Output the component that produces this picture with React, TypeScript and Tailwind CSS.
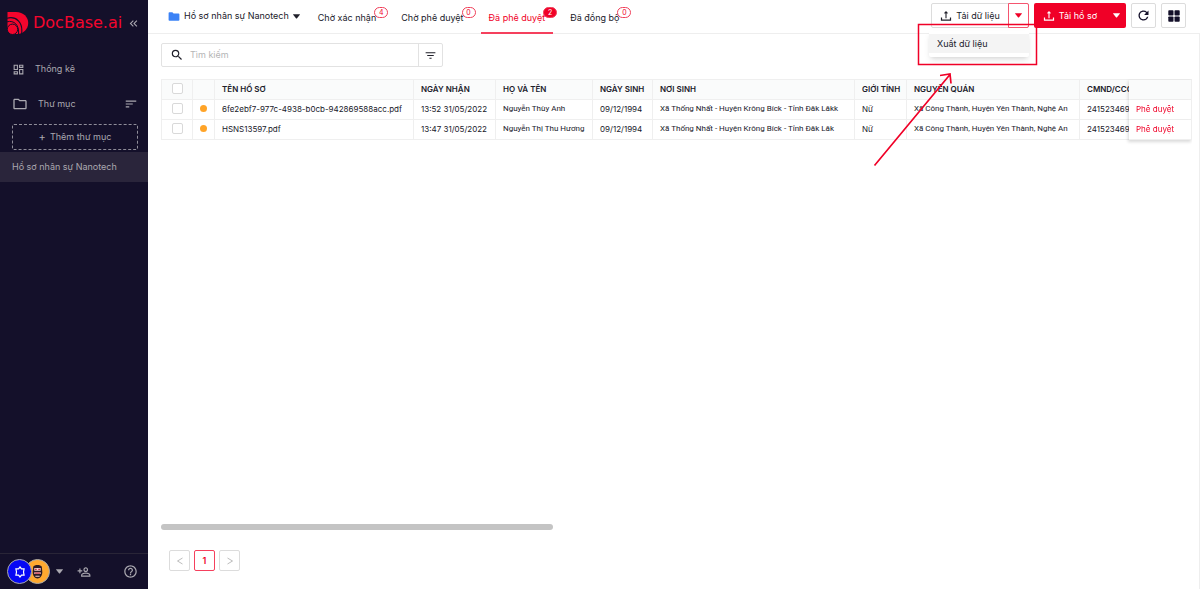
import type { ReactNode } from 'react';
import {
  MdFilterList,
  MdHelpOutline,
  MdKeyboardDoubleArrowLeft,
  MdOutlineDashboard,
  MdOutlineFolder,
  MdOutlinePersonAddAlt,
  MdRefresh,
  MdSearch,
  MdSort,
} from 'react-icons/md';

const TABS = [
  { label: 'Chờ xác nhận', count: 4 },
  { label: 'Chờ phê duyệt', count: 0 },
  { label: 'Đã phê duyệt', count: 2, active: true },
  { label: 'Đã đồng bộ', count: 0 },
];

const COLUMNS = [
  { name: 'TÊN HỒ SƠ' },
  { name: 'NGÀY NHẬN' },
  { name: 'HỌ VÀ TÊN', prose: true },
  { name: 'NGÀY SINH' },
  { name: 'NƠI SINH', prose: true },
  { name: 'GIỚI TÍNH' },
  { name: 'NGUYÊN QUÁN', prose: true },
  { name: 'CMND/CCCD' },
];

const ROWS = [
  [
    '6fe2ebf7-977c-4938-b0cb-942869588acc.pdf',
    '13:52 31/05/2022',
    'Nguyễn Thùy Anh',
    '09/12/1994',
    'Xã Thống Nhất - Huyện Krông Bíck - Tỉnh Đăk Lăkk',
    'Nữ',
    'Xã Công Thành, Huyện Yên Thành, Nghệ An',
    '241523469',
  ],
  [
    'HSNS13597.pdf',
    '13:47 31/05/2022',
    'Nguyễn Thị Thu Hương',
    '09/12/1994',
    'Xã Thống Nhất - Huyện Krông Bíck - Tỉnh Đăk Lăk',
    'Nữ',
    'Xã Công Thành, Huyện Yên Thành, Nghệ An',
    '241523469',
  ],
];

function Logo() {
  return (
    <svg viewBox="0 0 22 24" className="h-6 w-[22px] shrink-0" fill="none" aria-hidden="true">
      <path d="M.5 1H9c7.500 0 12.200 5 12.200 11S16.500 23 10 23H6L.5 18z" fill="#f5052d" />
      <path d="M0 7.200c9-2.400 16.500 4 14.500 16" stroke="#14102a" strokeWidth="1.100" />
      <path d="M0 10.800c7-1.800 12.500 3 11.500 12.500" stroke="#14102a" strokeWidth="1" />
      <circle cx="5.500" cy="18.300" r="5.200" fill="#f5052d" stroke="#14102a" strokeWidth="1" />
    </svg>
  );
}

function Caret() {
  return (
    <svg viewBox="0 0 8 5" className="h-[5px] w-[7px] shrink-0" fill="currentColor" aria-hidden="true">
      <path d="M.3 0h7.400q.4.200.1.600L4.400 4.700q-.4.400-.8 0L.2.600Q-.1.200.3 0z" />
    </svg>
  );
}

function TrayIcon() {
  return (
    <svg viewBox="0 0 12 12" className="size-3 shrink-0" fill="none" stroke="currentColor" aria-hidden="true">
      <path d="M1.500 7.500v2.700h9V7.500" strokeWidth="1.200" />
      <path d="M6 1.800v6.400M4.500 3.300 6 1.800l1.500 1.500" strokeWidth="1.100" />
    </svg>
  );
}

function Sidebar() {
  return (
    <aside className="flex w-[148px] shrink-0 flex-col bg-[#14102a] text-[9px] text-[#aaa8b0]">
      <div className="flex h-[46px] items-center justify-between pr-2 pl-[7px]">
        <div className="flex items-center gap-1">
          <Logo />
          <span className="font-['DejaVu_Sans',sans-serif] text-base text-[#f5052d]">DocBase.ai</span>
        </div>
        <button type="button" aria-label="Thu gọn" className="shrink-0">
          <MdKeyboardDoubleArrowLeft size={13} />
        </button>
      </div>

      <nav className="flex flex-col">
        <a href="#thong-ke" className="mt-2 flex h-[30px] items-center gap-2.5 px-3">
          <MdOutlineDashboard size={13} />
          Thống kê
        </a>
        <div className="mt-1 flex h-[32px] items-center gap-3 pr-2.5 pl-3">
          <a href="#thu-muc" className="flex flex-1 items-center gap-2.5">
            <MdOutlineFolder size={16} />
            Thư mục
          </a>
          <button type="button" aria-label="Sắp xếp">
            <MdSort size={14} />
          </button>
        </div>
        <button
          type="button"
          className="mt-1 mr-2.5 ml-3 flex h-[26px] items-center justify-center gap-1 rounded-xs border border-dashed border-[#8f8d99]"
        >
          <span className="text-[11px] leading-3">+</span> Thêm thư mục
        </button>
        <a href="#nanotech" className="mt-[2px] flex h-[30px] items-center bg-[#2a253b] px-3">
          Hồ sơ nhân sự Nanotech
        </a>
      </nav>

      <div className="mt-auto flex h-9 items-center border-t border-[#292537] px-[7px]">
        <span className="z-10 flex size-[25px] items-center justify-center rounded-full border border-[#aaa] bg-[#0608f5] text-white">
          <svg viewBox="0 0 12 12" className="size-3" fill="none" stroke="currentColor" strokeWidth="1.200" aria-hidden="true">
            <path d="M6 1 7.500 2.800h2.600L9.500 6l.6 3.200H7.500L6 11 4.500 9.200H1.900L2.500 6l-.6-3.200h2.600z" />
          </svg>
        </span>
        <span className="-ml-[7px] flex size-[25px] items-center justify-center rounded-full border border-[#aaa] bg-[#ffa930]">
          <svg viewBox="0 0 14 14" className="size-[15px]" aria-hidden="true">
            <path d="M3 2.500C4 .5 10 .5 11 2.500l.5 5C11.500 11 9.500 13.500 7 13.500S2.500 11 2.500 7.500z" fill="#2c1b25" />
            <path d="M4 3.800h6v2.400H4zM4 7.600h6v1.800H4zM5 11h4v.8H5z" fill="#f6d3cc" />
            <path d="M4.500 5H6.300M7.700 5H9.500M4.500 8.500h5" stroke="#c8394e" />
          </svg>
        </span>
        <button type="button" aria-label="Tài khoản" className="ml-1.5">
          <Caret />
        </button>
        <button type="button" aria-label="Thêm người" className="ml-[14px]">
          <MdOutlinePersonAddAlt size={14} className="-scale-x-100" />
        </button>
        <button type="button" aria-label="Trợ giúp" className="ml-auto pr-[3px]">
          <MdHelpOutline size={15} />
        </button>
      </div>
    </aside>
  );
}

function ExportMenu() {
  return (
    <div className="relative">
      <div className="flex h-[25px] rounded-xs border border-[#dcdcdc] bg-white">
        <button type="button" className="flex w-[76px] items-center justify-center gap-1 whitespace-nowrap">
          <TrayIcon />
          Tải dữ liệu
        </button>
        <button
          type="button"
          aria-label="Mở danh sách"
          className="-my-px -mr-px flex w-[21px] items-center justify-center rounded-r-xs border border-[#f5556f] text-[#f00027]"
        >
          <Caret />
        </button>
      </div>

      <div role="menu" className="absolute top-7 right-0 z-10 w-[100px] rounded-xs bg-white pt-[3px] pb-1 shadow-md">
        <button type="button" role="menuitem" className="flex h-[19px] w-full items-center bg-[#f4f4f4] px-2">
          Xuất dữ liệu
        </button>
      </div>

      {/* Highlight box and arrow over the open menu */}
      <svg
        viewBox="0 0 168 146"
        className="pointer-events-none absolute top-5 -right-[12px] z-20 h-[146px] w-[168px] max-w-none"
        fill="none"
        stroke="#f00027"
        aria-hidden="true"
      >
        <rect x="45.500" y="1.500" width="118" height="40" strokeWidth="1.500" />
        <path d="M1.500 142.500 77 51.500M67 52.500l10-1.500 1 9.500" strokeWidth="1.700" />
      </svg>
    </div>
  );
}

function Header() {
  return (
    <header className="flex h-[34px] items-start border-b border-[#eeeeee] pr-3.5 pl-5 text-[9px] text-[#20202a]">
      <button type="button" className="flex h-8 items-center whitespace-nowrap">
        <svg viewBox="0 0 12 10" className="mr-1 h-[9px] w-3" aria-hidden="true">
          <path d="M0 1.200Q0 .3 1 .3h3.200l1.300 1.300H11q1 0 1 1V9q0 .8-1 .8H1Q0 9.800 0 9z" fill="#3b82f6" />
        </svg>
        <span className="mr-1">Hồ sơ nhân sự Nanotech</span>
        <Caret />
      </button>

      <div role="tablist" className="ml-2.5 flex h-[34px] gap-[9px]">
        {TABS.map(({ label, count, active }) => (
          <button
            key={label}
            type="button"
            role="tab"
            aria-selected={!!active}
            className={`relative border-b-2 px-2 pt-1 whitespace-nowrap ${
              active ? 'border-[#f5405d] text-[#f00027]' : 'border-transparent'
            }`}
          >
            {label}
            <span
              className={`absolute top-[7px] -right-1 flex h-[11px] w-[14px] items-center justify-center rounded-full border border-[#f0405a] text-[7px] leading-none ${
                active ? 'bg-[#f00027] text-white' : 'bg-white text-[#f00027]'
              }`}
            >
              {count}
            </span>
          </button>
        ))}
      </div>

      <div className="mt-[3px] ml-auto flex gap-[5px]">
        <ExportMenu />
        <div className="flex h-[25px] w-[92px] rounded-xs bg-[#f00027] text-white">
          <button type="button" className="flex flex-1 items-center justify-center gap-1 whitespace-nowrap">
            <TrayIcon />
            Tải hồ sơ
          </button>
          <button type="button" aria-label="Mở danh sách" className="flex w-5 items-center justify-center">
            <Caret />
          </button>
        </div>
        <IconButton label="Làm mới">
          <MdRefresh size={15} />
        </IconButton>
        <IconButton label="Dạng lưới">
          <svg viewBox="0 0 12 12" className="size-3" fill="currentColor" aria-hidden="true">
            <rect x=".3" y=".3" width="5.200" height="5.200" rx=".8" />
            <rect x="6.500" y=".3" width="5.200" height="5.200" rx=".8" />
            <rect x=".3" y="6.500" width="5.200" height="5.200" rx=".8" />
            <rect x="6.500" y="6.500" width="5.200" height="5.200" rx=".8" />
          </svg>
        </IconButton>
      </div>
    </header>
  );
}

function IconButton({ label, children }: { label: string; children: ReactNode }) {
  return (
    <button
      type="button"
      aria-label={label}
      className="flex size-[25px] items-center justify-center rounded-xs border border-[#dcdcdc] bg-white text-[#14102a]"
    >
      {children}
    </button>
  );
}

function CheckBox({ label }: { label: string }) {
  return (
    <input
      type="checkbox"
      aria-label={label}
      className="mx-auto block size-[11px] appearance-none rounded-xs border border-[#d9d9d9] bg-white"
    />
  );
}

function RecordsTable() {
  const cell = 'h-5 border-r border-b border-[#efefef] pt-0 pb-[2px]';
  return (
    <div className="overflow-hidden pb-2">
      <table className="w-[2725px] table-fixed border-separate border-spacing-0 border-t border-l border-[#efefef] text-left text-[8px] leading-3 whitespace-nowrap text-[#20202a]">
        <colgroup>
          <col className="w-[31px]" />
          <col className="w-[22px]" />
          <col className="w-[199px]" />
          <col className="w-[82px]" />
          <col className="w-[97px]" />
          <col className="w-[60px]" />
          <col className="w-[202px]" />
          <col className="w-[52px]" />
          <col className="w-[173px]" />
          <col className="w-[90px]" />
          <col />
          <col className="w-[63px]" />
        </colgroup>
        <thead>
          <tr className="bg-[#fafbfb]">
            <th className={cell}>
              <CheckBox label="Chọn tất cả" />
            </th>
            <th className={cell} />
            {COLUMNS.map(({ name }) => (
              <th key={name} className={`${cell} pl-[7px] font-semibold`}>
                {name}
              </th>
            ))}
            <th className={cell} />
            <th className={`${cell} sticky right-0 bg-[#fafbfb] shadow-[-1px_1px_3px_rgba(0,0,0,0.15)]`} />
          </tr>
        </thead>
        <tbody>
          {ROWS.map((row) => (
            <tr key={row[0]}>
              <td className={cell}>
                <CheckBox label={row[0]} />
              </td>
              <td className={cell}>
                <span className="mx-auto block size-[7px] rounded-full bg-[#ffa428]" />
              </td>
              {row.map((value, i) => (
                <td
                  key={COLUMNS[i].name}
                  className={`${cell} pl-[7px] ${COLUMNS[i].prose ? "font-['Roboto',sans-serif]" : ''}`}
                >
                  {value}
                </td>
              ))}
              <td className={cell} />
              <td className={`${cell} sticky right-0 bg-white pl-[7px] shadow-[-1px_2px_3px_rgba(0,0,0,0.15)]`}>
                <button type="button" className="text-[#f00027]">
                  Phê duyệt
                </button>
              </td>
            </tr>
          ))}
        </tbody>
      </table>
    </div>
  );
}

function Pagination() {
  const item = 'flex size-[21px] items-center justify-center rounded-xs border bg-white';
  return (
    <nav aria-label="Phân trang" className="mt-5 mb-[18px] ml-2 flex gap-1 text-[9px]">
      <button type="button" aria-label="Trang trước" className={`${item} border-[#dcdcdc] text-[#bdbdbd]`}>
        <svg viewBox="0 0 8 8" className="size-2" fill="none" stroke="currentColor">
          <path d="M6.500 1 1.500 4l5 3" />
        </svg>
      </button>
      <button type="button" aria-current="page" className={`${item} border-[#f5405d] font-semibold text-[#f00027]`}>
        1
      </button>
      <button type="button" aria-label="Trang sau" className={`${item} border-[#dcdcdc] text-[#bdbdbd]`}>
        <svg viewBox="0 0 8 8" className="size-2" fill="none" stroke="currentColor">
          <path d="m1.500 1 5 3-5 3" />
        </svg>
      </button>
    </nav>
  );
}

export default function App() {
  return (
    <div className="flex min-h-screen bg-white font-['Inter',sans-serif]">
      <Sidebar />
      <div className="flex min-w-0 flex-1 flex-col">
        <Header />
        <main className="flex flex-1 flex-col border-r border-[#eeeeee] pr-[7px] pl-[13px]">
          <div className="mt-[9px] flex h-6 w-[282px] items-center rounded-xs border border-[#e2e2e2] text-[#20202a]">
            <MdSearch size={14} className="ml-2 shrink-0" />
            <input
              type="search"
              aria-label="Tìm kiếm"
              placeholder="Tìm kiếm"
              className="min-w-0 flex-1 pl-1.5 text-[9px] outline-none placeholder:text-[#b5b5b5]"
            />
            <button
              type="button"
              aria-label="Bộ lọc"
              className="flex h-full w-6 items-center justify-center border-l border-[#e2e2e2]"
            >
              <MdFilterList size={13} />
            </button>
          </div>

          <div className="mt-3">
            <RecordsTable />
          </div>

          <div className="mt-auto h-[6px] w-[38%] rounded-full bg-[#c4c4c4]" />
          <Pagination />
        </main>
      </div>
    </div>
  );
}
